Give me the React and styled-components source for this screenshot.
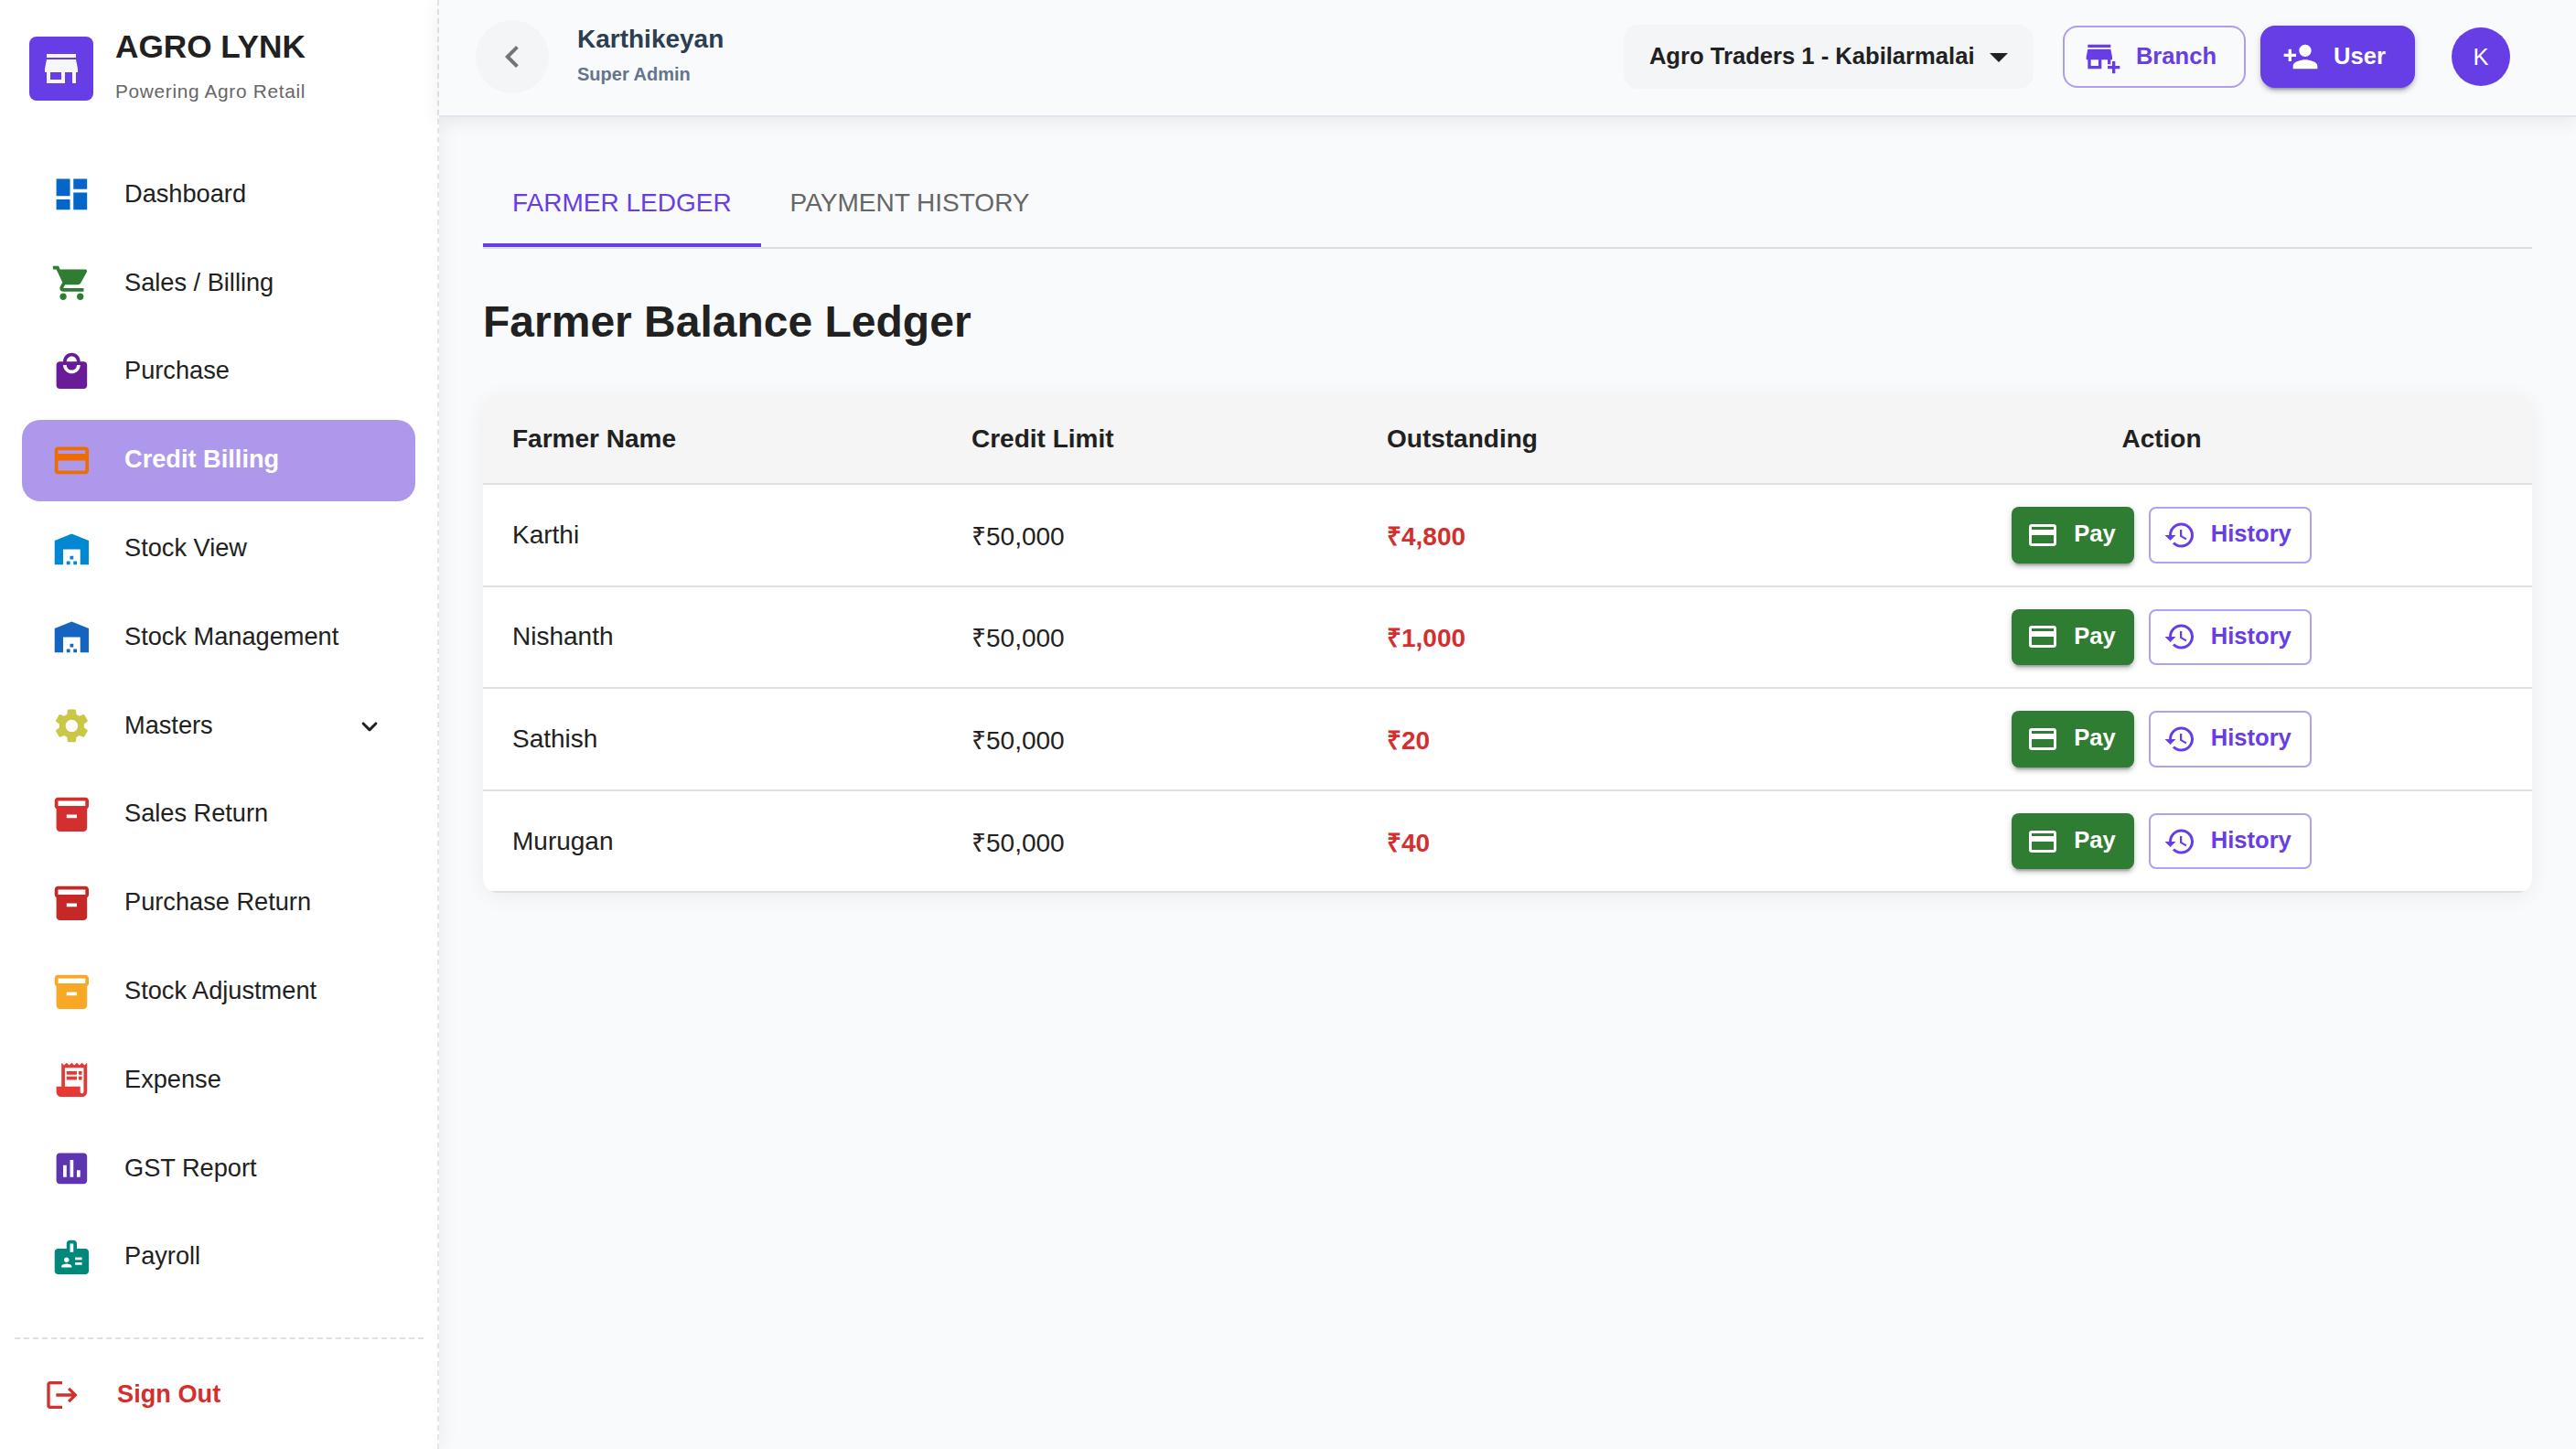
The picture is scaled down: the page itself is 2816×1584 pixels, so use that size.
import React from 'react';
import styled, { createGlobalStyle, css } from 'styled-components';
import {
  MdAddBusiness,
  MdArrowDropDown,
  MdAssessment,
  MdBadge,
  MdChevronLeft,
  MdDashboard,
  MdHistory,
  MdInventory2,
  MdLocalMall,
  MdLogout,
  MdOutlinePayment,
  MdPersonAdd,
  MdReceiptLong,
  MdSettings,
  MdShoppingCart,
  MdStore,
  MdWarehouse,
} from 'react-icons/md';

const colors = {
  primary: '#673de6',
  primaryBorder: 'rgba(103, 61, 230, 0.5)',
  primarySoft: '#ae98eb',
  text: '#212121',
  textMuted: '#666',
  danger: '#d32f2f',
  success: '#2e7d32',
  page: '#f9fafc',
  divider: '#e0e0e0',
};

const raised = css`
  box-shadow: 0 6px 2px -4px rgba(0, 0, 0, 0.2), 0 4px 4px rgba(0, 0, 0, 0.14),
    0 2px 10px rgba(0, 0, 0, 0.12);
`;

const GlobalStyle = createGlobalStyle`
  * {
    box-sizing: border-box;
  }
  body {
    margin: 0;
    font-family: Helvetica, 'Liberation Sans', Arial, sans-serif;
    color: ${colors.text};
    background: ${colors.page};
  }
  button {
    font-family: inherit;
    cursor: pointer;
  }
  svg {
    display: block;
    flex: none;
  }
`;

const Page = styled.div`
  display: flex;
  height: 1584px;
  overflow: hidden;
`;

const Sidebar = styled.aside`
  position: relative;
  z-index: 1;
  flex: none;
  display: flex;
  flex-direction: column;
  width: 480px;
  background: #fff;
  border-right: 2px dashed #e2e6ea;
  box-shadow: 4px 0 20px rgba(0, 0, 0, 0.05);
`;

const Brand = styled.div`
  display: flex;
  align-items: flex-start;
  gap: 24px;
  height: 168.4px;
  padding: 26px 32px 0;
`;

const BrandLogo = styled.div`
  display: flex;
  align-items: center;
  justify-content: center;
  width: 70px;
  height: 70px;
  margin-top: 14px;
  border-radius: 8px;
  color: #f5f7f9;
  background: ${colors.primary};
`;

const BrandName = styled.h1`
  margin: 0;
  font-size: 35.2px;
  font-weight: 700;
  line-height: 50px;
`;

const BrandTagline = styled.p`
  margin: 8px 0 0;
  font-size: 20.8px;
  letter-spacing: 0.69px;
  line-height: 32px;
  color: ${colors.textMuted};
`;

const Nav = styled.nav`
  display: flex;
  flex-direction: column;
  gap: 8px;
  padding: 0 24px;
`;

const NavItem = styled.a`
  display: flex;
  align-items: center;
  height: 88.8px;
  padding: 0 32px;
  border-radius: 20px;
  font-size: 27.2px;
  font-weight: ${props => (props.$active ? 700 : 400)};
  color: ${props => (props.$active ? '#fff' : colors.text)};
  background: ${props => (props.$active ? colors.primarySoft : 'transparent')};
`;

const NavIcon = styled.span`
  width: 80px;
  color: ${props => props.$color};
`;

const NavLabel = styled.span`
  flex: 1;
  padding-bottom: 2px;
`;

const SignOut = styled.a`
  display: flex;
  align-items: center;
  height: 122px;
  margin: auto 15px 0 16px;
  padding: 2px 32px 0;
  border-top: 2px dashed ${colors.divider};
  font-size: 27.2px;
  font-weight: 700;
  color: ${colors.danger};
`;

const Content = styled.div`
  flex: 1;
  display: flex;
  flex-direction: column;
  min-width: 0;
`;

const Header = styled.header`
  position: relative;
  z-index: 2;
  display: flex;
  align-items: center;
  height: 128px;
  padding: 0 72px 2px 40px;
  border-bottom: 2px solid #e1e4ec;
  background: ${colors.page};
  box-shadow: 0 4px 20px rgba(0, 0, 0, 0.08);
`;

const BackButton = styled.button`
  display: flex;
  align-items: center;
  justify-content: center;
  width: 80px;
  height: 80px;
  padding: 0;
  border: 0;
  border-radius: 50%;
  color: #757575;
  background: #f4f5f7;
`;

const Profile = styled.div`
  flex: 1;
  margin-left: 31px;
`;

const ProfileName = styled.p`
  margin: 0;
  font-size: 28px;
  font-weight: 700;
  line-height: 40px;
  color: #2c3e50;
`;

const ProfileRole = styled.p`
  margin: 0;
  padding-bottom: 2px;
  font-size: 20px;
  font-weight: 700;
  line-height: 36px;
  color: #64748b;
`;

const BranchSelect = styled.button`
  display: flex;
  align-items: center;
  width: 448px;
  height: 70px;
  margin-right: 32px;
  padding: 0 14px 0 28px;
  border: 0;
  border-radius: 16px;
  font-size: 25.6px;
  font-weight: 700;
  color: ${colors.text};
  background: #f4f5f7;
  svg {
    margin-left: auto;
  }
`;

const HeaderButton = styled.button`
  display: flex;
  align-items: center;
  gap: 16px;
  height: 68px;
  margin-right: ${props => (props.$primary ? 40 : 16)}px;
  padding: 0 30px 0 22px;
  border: 2px solid ${props => (props.$primary ? colors.primary : colors.primaryBorder)};
  border-radius: 16px;
  font-size: 25.6px;
  font-weight: 700;
  color: ${props => (props.$primary ? '#fff' : colors.primary)};
  background: ${props => (props.$primary ? colors.primary : 'transparent')};
  ${props => props.$primary && raised}
`;

const Avatar = styled.div`
  display: flex;
  align-items: center;
  justify-content: center;
  width: 64px;
  height: 64px;
  border-radius: 50%;
  font-size: 25.6px;
  color: #fff;
  background: ${colors.primary};
`;

const Main = styled.main`
  padding: 46px 48px;
`;

const Tabs = styled.div`
  display: flex;
  height: 98px;
  border-bottom: 2px solid #dcdddf;
`;

const Tab = styled.button`
  height: 96px;
  padding: 4px 32px 0;
  border: 0;
  border-bottom: 4px solid ${props => (props.$active ? colors.primary : 'transparent')};
  font-size: 28px;
  text-transform: uppercase;
  color: ${props => (props.$active ? colors.primary : colors.textMuted)};
  background: none;
`;

const Title = styled.h2`
  margin: 48px 0 48px;
  font-size: 48px;
  font-weight: 700;
  line-height: 64px;
`;

const Card = styled.section`
  border-radius: 16px;
  overflow: hidden;
  background: #fff;
  box-shadow: 0 4px 24px rgba(0, 0, 0, 0.06);
`;

const Row = styled.div`
  display: grid;
  grid-template-columns: 502px 454px 474px 1fr;
  align-items: center;
  height: 111.6px;
  border-bottom: 2px solid ${colors.divider};
  font-size: 28px;
`;

const HeadRow = styled(Row)`
  height: 98px;
  font-weight: 700;
  background: #f5f5f5;
`;

const Cell = styled.div`
  padding: 0 32px;
  text-align: ${props => props.$align || 'left'};
`;

const Outstanding = styled(Cell)`
  font-weight: 700;
  color: ${colors.danger};
`;

const Actions = styled(Cell)`
  display: flex;
  justify-content: center;
  gap: 16px;
`;

const RowButton = styled.button`
  display: flex;
  align-items: center;
  gap: 16px;
  height: 61.6px;
  border-radius: 8px;
  font-size: 25.6px;
  font-weight: 700;
`;

const PayButton = styled(RowButton)`
  padding: 0 20px 0 16px;
  border: 0;
  color: #fff;
  background: ${colors.success};
  ${raised}
`;

const HistoryButton = styled(RowButton)`
  padding: 0 20px 0 14px;
  border: 2px solid ${colors.primaryBorder};
  color: ${colors.primary};
  background: transparent;
`;

const ButtonText = styled.span`
  padding-bottom: 2px;
`;

const ChevronDown = () => (
  <svg width="36" height="36" viewBox="0 0 24 24" fill="currentColor">
    <path d="M8.12 9.29 12 13.17l3.88-3.88c.39-.39 1.02-.39 1.41 0 .39.39.39 1.02 0 1.41l-4.59 4.59c-.39.39-1.02.39-1.41 0L6.7 10.7a.9959.9959 0 0 1 0-1.41c.39-.38 1.03-.39 1.42 0z" />
  </svg>
);

const menu = [
  { label: 'Dashboard', icon: MdDashboard, color: '#0566c9' },
  { label: 'Sales / Billing', icon: MdShoppingCart, color: '#2e7d32' },
  { label: 'Purchase', icon: MdLocalMall, color: '#6a1b9a' },
  { label: 'Credit Billing', icon: MdOutlinePayment, color: '#ef6c00', active: true },
  { label: 'Stock View', icon: MdWarehouse, color: '#0288d1' },
  { label: 'Stock Management', icon: MdWarehouse, color: '#1565c0' },
  { label: 'Masters', icon: MdSettings, color: '#c9c745', expandable: true },
  { label: 'Sales Return', icon: MdInventory2, color: '#d32f2f' },
  { label: 'Purchase Return', icon: MdInventory2, color: '#c62828' },
  { label: 'Stock Adjustment', icon: MdInventory2, color: '#f9a825' },
  { label: 'Expense', icon: MdReceiptLong, color: '#e53935' },
  { label: 'GST Report', icon: MdAssessment, color: '#5e35b1' },
  { label: 'Payroll', icon: MdBadge, color: '#00897b' },
];

const farmers = [
  { name: 'Karthi', limit: 50000, outstanding: 4800 },
  { name: 'Nishanth', limit: 50000, outstanding: 1000 },
  { name: 'Sathish', limit: 50000, outstanding: 20 },
  { name: 'Murugan', limit: 50000, outstanding: 40 },
];

const toRupees = amount => `₹${amount.toLocaleString('en-US')}`;

const App = () => {
  return (
    <Page>
      <GlobalStyle />
      <Sidebar>
        <Brand>
          <BrandLogo>
            <MdStore size={48} />
          </BrandLogo>
          <div>
            <BrandName>AGRO LYNK</BrandName>
            <BrandTagline>Powering Agro Retail</BrandTagline>
          </div>
        </Brand>
        <Nav>
          {menu.map(({ label, icon: Icon, color, active, expandable }) => (
            <NavItem key={label} $active={active}>
              <NavIcon $color={color}>
                <Icon size={44.8} />
              </NavIcon>
              <NavLabel>{label}</NavLabel>
              {expandable && <ChevronDown />}
            </NavItem>
          ))}
        </Nav>
        <SignOut>
          <NavIcon>
            <MdLogout size={40} />
          </NavIcon>
          <NavLabel>Sign Out</NavLabel>
        </SignOut>
      </Sidebar>
      <Content>
        <Header>
          <BackButton>
            <MdChevronLeft size={48} />
          </BackButton>
          <Profile>
            <ProfileName>Karthikeyan</ProfileName>
            <ProfileRole>Super Admin</ProfileRole>
          </Profile>
          <BranchSelect>
            <ButtonText>Agro Traders 1 - Kabilarmalai</ButtonText>
            <MdArrowDropDown size={48} />
          </BranchSelect>
          <HeaderButton>
            <MdAddBusiness size={40} />
            <ButtonText>Branch</ButtonText>
          </HeaderButton>
          <HeaderButton $primary>
            <MdPersonAdd size={40} />
            <ButtonText>User</ButtonText>
          </HeaderButton>
          <Avatar>K</Avatar>
        </Header>
        <Main>
          <Tabs>
            <Tab $active>Farmer Ledger</Tab>
            <Tab>Payment History</Tab>
          </Tabs>
          <Title>Farmer Balance Ledger</Title>
          <Card>
            <HeadRow>
              <Cell>Farmer Name</Cell>
              <Cell>Credit Limit</Cell>
              <Cell>Outstanding</Cell>
              <Cell $align="center">Action</Cell>
            </HeadRow>
            {farmers.map(({ name, limit, outstanding }) => (
              <Row key={name}>
                <Cell>{name}</Cell>
                <Cell>{toRupees(limit)}</Cell>
                <Outstanding>{toRupees(outstanding)}</Outstanding>
                <Actions>
                  <PayButton>
                    <MdOutlinePayment size={36} />
                    <ButtonText>Pay</ButtonText>
                  </PayButton>
                  <HistoryButton>
                    <MdHistory size={36} />
                    <ButtonText>History</ButtonText>
                  </HistoryButton>
                </Actions>
              </Row>
            ))}
          </Card>
        </Main>
      </Content>
    </Page>
  );
};

export default App;
